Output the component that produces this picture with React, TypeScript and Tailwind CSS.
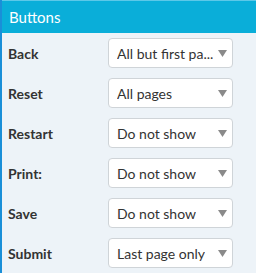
const rows = [
  { label: "Back", value: "All but first pa..." },
  { label: "Reset", value: "All pages" },
  { label: "Restart", value: "Do not show" },
  { label: "Print:", value: "Do not show" },
  { label: "Save", value: "Do not show" },
  { label: "Submit", value: "Last page only" },
];

function Select({ value }: { value: string }) {
  return (
    <div className="flex h-[30px] w-[125px] items-center justify-between gap-[3px] rounded-[4px] border border-[#cfd4d8] bg-white pl-2 pr-[4px]">
      <span className="overflow-hidden whitespace-nowrap text-[14px] text-[#333]">{value}</span>
      <svg width="9" height="7" viewBox="0 0 9 7" className="mr-[1px] shrink-0">
        <path d="M0 0 H9 L4.5 7 Z" fill="#8a8a8a" />
      </svg>
    </div>
  );
}

export default function App() {
  return (
    <div
      className="h-[273px] w-[256px] overflow-hidden border-l-2 border-[#1a8fd8] bg-[#edf3f8]"
      style={{ fontFamily: "Lato, 'Open Sans', sans-serif" }}
    >
      <div className="flex h-[33px] items-center border-t border-[#5cc8e8] bg-[#0aaed9] pl-[7px] text-[15px] text-white">
        Buttons
      </div>
      <div className="flex flex-col gap-[10px] pt-[5px]">
        {rows.map((r) => (
          <div key={r.label} className="flex items-center">
            <span className="w-[106px] pl-[6px] text-[14px] font-bold text-[#333]">
              {r.label}
            </span>
            <Select value={r.value} />
          </div>
        ))}
      </div>
    </div>
  );
}
